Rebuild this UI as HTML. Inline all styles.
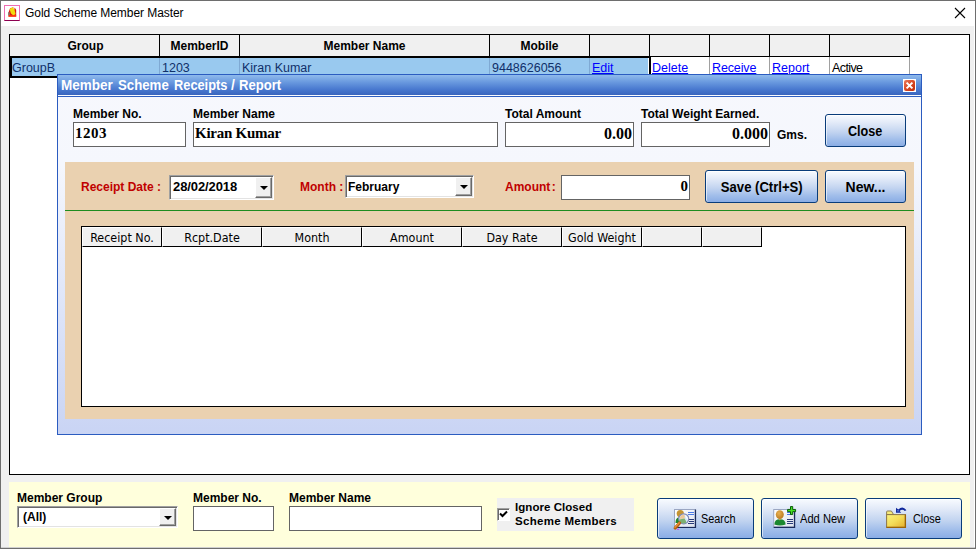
<!DOCTYPE html>
<html><head><meta charset="utf-8">
<style>
*{box-sizing:border-box;margin:0;padding:0}
html,body{width:976px;height:549px;overflow:hidden;background:#fff}
body{position:relative;font-family:"Liberation Sans",sans-serif;font-size:12px;color:#000}
.abs{position:absolute}
.lbl{position:absolute;font-weight:bold;font-size:12px;line-height:14px;white-space:nowrap}
.tb{position:absolute;background:#fff;border:1px solid #646464}
.serif{font-family:"Liberation Serif",serif;font-weight:bold;font-size:16px;line-height:18px;white-space:nowrap;position:absolute}
.hd{position:absolute;top:35px;height:21px;background:#f0f0f0;border-right:1px solid #000;font-weight:bold;font-size:12px;line-height:23px;text-align:center}
.cell{position:absolute;top:59px;height:18px;font-size:12.5px;line-height:19px;white-space:nowrap;padding-left:2px}
.lnk{color:#0000ff;text-decoration:underline}
.btn{position:absolute;border:1px solid #093c7a;border-radius:3px;box-shadow:inset 0 1px 0 #fff,inset 1px 0 0 rgba(255,255,255,.6);background:linear-gradient(#f8fbff 0%,#e2eaf8 25%,#c2d4f0 55%,#a0bdea 80%,#8aade5 100%);font-weight:bold;font-size:14px;text-align:center;white-space:nowrap}
.btn span{display:inline-block}
.ih{position:absolute;top:227px;height:20px;background:#f0f0f0;border:1px solid;border-color:#fff #000 #000 #fff;font-family:"DejaVu Sans Condensed","Liberation Sans",sans-serif;font-size:12.4px;line-height:19px;text-align:center;white-space:nowrap}
.sunk{position:absolute;background:#fff;border:1px solid;border-color:#a0a0a0 #fff #fff #a0a0a0;box-shadow:inset 1px 1px 0 #696969,inset -1px -1px 0 #e3e3e3}
.ddb{position:absolute;background:#f0f0f0;border:1px solid;border-color:#fff #696969 #696969 #fff;box-shadow:inset -1px -1px 0 #a0a0a0}
.ddb:after{content:"";position:absolute;left:4px;top:7px;border-left:4px solid transparent;border-right:4px solid transparent;border-top:4px solid #000}
.ddb.d8:after{top:8px}
.bt{top:511px;font-size:12.5px;line-height:16px;white-space:nowrap;transform:scaleX(.87);transform-origin:0 0}
.dt span{position:absolute;top:0;font-weight:bold;font-size:14px;line-height:16px;color:#fff;white-space:nowrap;transform-origin:0 0}
</style></head><body>
<!-- window frame -->
<div class="abs" style="left:0;top:0;width:976px;height:549px;border:1px solid #6e6e6e"></div>
<div class="abs" style="left:1px;top:547px;width:974px;height:1px;background:#d0d0d0"></div>
<!-- title bar -->
<div class="abs" style="left:4px;top:5px;width:16px;height:16px;border:1px solid #f06eb4;border-bottom-color:#8c0050;background:#fff">
<svg width="14" height="14" viewBox="0 0 14 14" style="position:absolute;left:0;top:0"><path d="M3.5 10.6 V6.5 L5 2.6 L8 1.2 L10.4 2.4 L11.2 4 V10.6 Z" fill="#dc1810"/><path d="M4.6 3 L8 1 L9.4 3.2 L10.6 8 L8.4 9.6 L6 7.6 Z" fill="#f2da0c"/><path d="M3.5 9.2h7.7v1.6h-7.7z" fill="#ff3c10"/><path d="M3 6.6 L4.4 6 L4.8 9 L3 9.2Z" fill="#8a8078"/><path d="M7.6 1.4 L9.2 1.6 L9.6 3.4 Z" fill="#f4f4f4"/></svg>
</div>
<div class="abs" style="left:25px;top:5px;font-size:12px;line-height:16px;white-space:nowrap;letter-spacing:-0.06px" id="title">Gold Scheme Member Master</div>
<svg class="abs" style="left:954px;top:7px" width="12" height="12" viewBox="0 0 12 12"><path d="M1 1 L11 11 M11 1 L1 11" stroke="#000" stroke-width="1.1" fill="none"/></svg>
<!-- client -->
<div class="abs" style="left:1px;top:26px;width:973px;height:521px;background:#f0f0f0"></div>
<!-- main grid -->
<div class="abs" style="left:9px;top:34px;width:961px;height:441px;background:#fff;border:1px solid #000"></div>
<div class="abs" style="left:10px;top:56px;width:900px;height:1px;background:#000"></div>
<div class="hd" style="left:10px;width:150px;padding-left:2px">Group</div>
<div class="hd" style="left:160px;width:80px">MemberID</div>
<div class="hd" style="left:240px;width:250px">Member Name</div>
<div class="hd" style="left:490px;width:100px">Mobile</div>
<div class="hd" style="left:590px;width:60px"></div>
<div class="hd" style="left:650px;width:60px"></div>
<div class="hd" style="left:710px;width:60px"></div>
<div class="hd" style="left:770px;width:60px"></div>
<div class="hd" style="left:830px;width:80px"></div>
<!-- selected row -->
<div class="abs" style="left:9px;top:56px;width:642px;height:22px;background:#000"></div>
<div class="abs" style="left:12px;top:58px;width:636px;height:18px;background:#99c9ef"></div>
<div class="abs" style="left:648px;top:58px;width:1px;height:18px;background:#fff"></div>
<div class="abs" style="left:159px;top:58px;width:1px;height:18px;background:#7fa9d3"></div>
<div class="abs" style="left:239px;top:58px;width:1px;height:18px;background:#7fa9d3"></div>
<div class="abs" style="left:489px;top:58px;width:1px;height:18px;background:#7fa9d3"></div>
<div class="abs" style="left:589px;top:58px;width:1px;height:18px;background:#7fa9d3"></div>
<div class="abs" style="left:709px;top:57px;width:1px;height:20px;background:#a0a0a0"></div>
<div class="abs" style="left:769px;top:57px;width:1px;height:20px;background:#a0a0a0"></div>
<div class="abs" style="left:829px;top:57px;width:1px;height:20px;background:#a0a0a0"></div>
<div class="abs" style="left:909px;top:57px;width:1px;height:20px;background:#a0a0a0"></div>
<div id="c1" class="cell" style="left:10px;color:#10306a">GroupB</div>
<div id="c2" class="cell" style="left:160px;color:#10306a">1203</div>
<div id="c3" class="cell" style="left:240px;color:#10306a">Kiran Kumar</div>
<div id="c4" class="cell" style="left:490px;color:#10306a">9448626056</div>
<div id="c5" class="cell lnk" style="left:590px">Edit</div>
<div id="c6" class="cell lnk" style="left:650px">Delete</div>
<div id="c7" class="cell lnk" style="left:710px;letter-spacing:-0.12px">Receive</div>
<div id="c8" class="cell lnk" style="left:770px">Report</div>
<div id="c9" class="cell" style="left:830px;letter-spacing:-0.6px">Active</div>
<!-- dialog -->
<div class="abs" style="left:57px;top:74px;width:865px;height:361px;border:1px solid #2b5cc0;background:linear-gradient(#f7f8fd 0px,#f5f7fd 90px,#c9d4f4 360px)"></div>
<div class="abs" style="left:58px;top:75px;width:863px;height:20px;background:linear-gradient(#8fbaec 0%,#6a9adf 35%,#4a7ad0 70%,#3a66be 100%)"></div>
<div class="abs" style="left:58px;top:95px;width:863px;height:1px;background:#fbfcff"></div>
<div class="abs" style="left:58px;top:96px;width:863px;height:1px;background:#3060c0"></div>
<div class="abs dt" id="dtitle" style="left:0;top:77px;width:400px;height:17px"><span id="w1" style="left:61px;transform:scaleX(.966)">Member</span><span id="w2" style="left:118px;transform:scaleX(.945)">Scheme</span><span id="w3" style="left:173.5px;transform:scaleX(.915)">Receipts</span><span id="w4" style="left:231px">/</span><span id="w5" style="left:238.5px;transform:scaleX(.935)">Report</span></div>
<div class="abs" style="left:903px;top:79px;width:13px;height:13px;background:#fff"><div style="position:absolute;left:1px;top:1px;width:11px;height:11px;border-radius:2px;background:linear-gradient(135deg,#ea7a5c 0%,#d84a26 50%,#c02c08 100%)"></div>
<svg width="13" height="13" viewBox="0 0 13 13" style="position:absolute;left:0;top:0"><path d="M3.6 3.6 L9.4 9.4 M9.4 3.6 L3.6 9.4" stroke="#fff" stroke-width="2" fill="none"/></svg></div>
<!-- dialog row 1 -->
<div class="lbl" style="left:73px;top:107px">Member No.</div>
<div class="lbl" style="left:193px;top:107px">Member Name</div>
<div class="lbl" style="left:505px;top:107px">Total Amount</div>
<div class="lbl" style="left:641px;top:107px">Total Weight Earned.</div>
<div class="tb" style="left:73px;top:122px;width:113px;height:25px"></div>
<div class="tb" style="left:193px;top:122px;width:305px;height:25px"></div>
<div class="tb" style="left:505px;top:122px;width:129px;height:25px"></div>
<div class="tb" style="left:641px;top:122px;width:129px;height:25px"></div>
<div id="n1" class="serif" style="left:75px;top:124px;font-size:15px;letter-spacing:0.5px">1203</div>
<div id="kk" class="serif" style="left:195px;top:124px;font-size:15px;letter-spacing:-0.25px">Kiran Kumar</div>
<div class="serif" style="right:344px;top:125px">0.00</div>
<div class="serif" style="right:208px;top:125px">0.000</div>
<div class="lbl" style="left:777px;top:128px">Gms.</div>
<div class="btn" style="left:825px;top:114px;width:81px;height:33px;line-height:33px"><span style="transform:scaleX(.9)">Close</span></div>
<!-- tan panel -->
<div class="abs" style="left:65px;top:162px;width:849px;height:257px;background:#ead1b0"></div>
<div class="abs" style="left:65px;top:210px;width:849px;height:1px;background:#1e8c1e"></div>
<div class="lbl" style="left:81px;top:180px;color:#c00000">Receipt Date :</div>
<div class="sunk" style="left:169px;top:175px;width:105px;height:25px"></div>
<div class="abs" style="left:173px;top:179px;font-weight:bold;font-size:13px;letter-spacing:-0.1px;line-height:16px">28/02/2018</div>
<div class="ddb d8" style="left:255px;top:177px;width:17px;height:21px"></div>
<div class="lbl" style="left:300px;top:180px;color:#c00000">Month :</div>
<div class="sunk" style="left:345px;top:175px;width:129px;height:23px"></div>
<div class="abs" style="left:348px;top:180px;font-weight:bold;font-size:12px;line-height:14px">February</div>
<div class="ddb" style="left:455px;top:177px;width:17px;height:19px"></div>
<div class="lbl" style="left:505px;top:180px;color:#c00000;word-spacing:-2px">Amount :</div>
<div class="tb" style="left:561px;top:175px;width:129px;height:25px"></div>
<div id="a0" class="serif" style="right:288px;top:177px;font-size:15px">0</div>
<div class="btn" style="left:705px;top:170px;width:113px;height:33px;line-height:33px"><span style="transform:scaleX(.935)">Save (Ctrl+S)</span></div>
<div class="btn" style="left:825px;top:170px;width:81px;height:33px;line-height:33px"><span>New...</span></div>
<!-- inner grid -->
<div class="abs" style="left:81px;top:226px;width:825px;height:181px;background:#fff;border:1px solid #000"></div>
<div class="ih" style="left:82px;width:80px">Receipt No.</div>
<div class="ih" style="left:162px;width:100px">Rcpt.Date</div>
<div class="ih" style="left:262px;width:100px">Month</div>
<div class="ih" style="left:362px;width:100px">Amount</div>
<div class="ih" style="left:462px;width:100px">Day Rate</div>
<div class="ih" style="left:562px;width:80px">Gold Weight</div>
<div class="ih" style="left:642px;width:60px"></div>
<div class="ih" style="left:702px;width:60px"></div>
<!-- bottom panel -->
<div class="abs" style="left:9px;top:482px;width:961px;height:65px;background:#ffffdc"></div>
<div class="lbl" style="left:17px;top:491px">Member Group</div>
<div class="lbl" style="left:193px;top:491px">Member No.</div>
<div class="lbl" style="left:289px;top:491px">Member Name</div>
<div class="sunk" style="left:17px;top:506px;width:161px;height:22px"></div>
<div class="abs" style="left:23px;top:510px;font-weight:bold;font-size:12px;line-height:14px">(All)</div>
<div class="ddb" style="left:159px;top:508px;width:17px;height:18px"></div>
<div class="tb" style="left:193px;top:506px;width:81px;height:25px"></div>
<div class="tb" style="left:289px;top:506px;width:193px;height:25px"></div>
<div class="abs" style="left:497px;top:498px;width:137px;height:33px;background:#f0f0f0"></div>
<div class="abs" style="left:497px;top:508px;width:13px;height:13px;background:#fff;border:1px solid;border-color:#a0a0a0 #fff #fff #a0a0a0;box-shadow:inset 1px 1px 0 #696969"></div>
<svg class="abs" style="left:497px;top:508px" width="13" height="13" viewBox="0 0 13 13"><path d="M3 5.5 L5.5 8 L10 3.5" stroke="#000" stroke-width="2" fill="none"/></svg>
<div class="lbl" style="left:515px;top:500px;font-size:11.5px;letter-spacing:0.3px;line-height:14px"><span style="letter-spacing:0.05px">Ignore Closed</span><br>Scheme Members</div>
<div class="btn" style="left:657px;top:498px;width:97px;height:41px"></div>
<div class="btn" style="left:761px;top:498px;width:97px;height:41px"></div>
<div class="btn" style="left:865px;top:498px;width:97px;height:41px"></div>
<!-- search icon -->
<svg class="abs" style="left:672px;top:506px" width="26" height="26" viewBox="0 0 26 26">
<defs><linearGradient id="cg" x1="0" y1="0" x2="1" y2="1"><stop offset="0" stop-color="#ffffff"/><stop offset="1" stop-color="#dfe4ee"/></linearGradient>
<linearGradient id="fg" x1="0" y1="0" x2="1" y2="1"><stop offset="0" stop-color="#f9f380"/><stop offset=".5" stop-color="#f4dc58"/><stop offset="1" stop-color="#e4ae2c"/></linearGradient>
<radialGradient id="hg" cx=".4" cy=".35" r=".7"><stop offset="0" stop-color="#e8b050"/><stop offset="1" stop-color="#b87820"/></radialGradient></defs>
<rect x="2.5" y="3.5" width="20.6" height="17.6" fill="url(#cg)" stroke="#9aa6c2"/>
<path d="M2.5 21.5 H23.5 V3.5" fill="none" stroke="#1c2c5c" stroke-width="1.2"/>
<path d="M16 6.5H22M16 8.5H22" stroke="#4a7ae6" stroke-width="1"/>
<path d="M17 13.5H22M17 15.5H22M16 17.5H22" stroke="#2a3c7a" stroke-width="1"/>
<circle cx="8.3" cy="7.6" r="3.6" fill="#c49432"/>
<path d="M3.5 17 Q3.5 11.5 7 11.5 L9 17 Z" fill="#22862c"/>
<circle cx="11.7" cy="12.8" r="5" fill="#d4e8f8" stroke="#8088b4" stroke-width="1.2"/>
<path d="M8 11.5 Q9 8.5 12 8.6 Q13.5 10 12.5 12.5 L8.2 13 Z" fill="#eec898"/>
<path d="M7.3 13.5 L12.5 12.6 Q14 15 14.5 16.5 Q11.5 18.5 8.5 16.6 Q7.3 15.3 7.3 13.5Z" fill="#7cb070"/>
<path d="M13 9 Q16 10 16 14 Q14 12.5 13.5 11Z" fill="#f4fbff"/>
<path d="M7.6 17 L3.2 22" stroke="#b85c10" stroke-width="3.2" stroke-linecap="round"/>
<path d="M7.2 16.8 L3 21.4" stroke="#e89038" stroke-width="1.4" stroke-linecap="round"/>
<rect x="5.4" y="22.8" width="1.2" height="1.2" fill="#e818e8"/>
</svg>
<!-- add new icon -->
<svg class="abs" style="left:772px;top:505px" width="26" height="26" viewBox="0 0 26 26">
<rect x="1.7" y="4.5" width="20.4" height="17.6" fill="url(#cg)" stroke="#9aa6c2"/>
<path d="M1.7 22.4 H22.6 V4.5" fill="none" stroke="#1c2c5c" stroke-width="1.2"/>
<path d="M15 7.5H19M15 9.5H19" stroke="#4a7ae6" stroke-width="1"/>
<path d="M15 14.5H21M15 16.5H21M15 18.5H21" stroke="#2a3c7a" stroke-width="1"/>
<path d="M2.4 19.5 Q2.4 14.2 7.8 14.2 Q13.6 14.2 13.6 19.5 Q8 21.6 2.4 19.5Z" fill="#1c8830"/>
<ellipse cx="7.8" cy="9.6" rx="4" ry="4.4" fill="url(#hg)"/>
<path d="M6.8 14 L7.8 15.6 L8.8 14Z" fill="#d8a050"/>
<path d="M18.5 1.55h2.2v2.9h2.9v2.2h-2.9v2.9h-2.2v-2.9h-2.9v-2.2h2.9z" fill="#44e020" stroke="#0a5c0a" stroke-width="1" stroke-linejoin="round"/>
</svg>
<!-- folder icon -->
<svg class="abs" style="left:884px;top:505px" width="26" height="26" viewBox="0 0 26 26">
<path d="M2.6 9.6 V7 Q2.6 6 3.6 6 H7.4 L9.6 9.6Z" fill="#f6ea78" stroke="#8c7c58" stroke-width="1"/>
<rect x="2.6" y="9.6" width="18.8" height="12.8" fill="url(#fg)" stroke="#8c7446" stroke-width="1"/>
<path d="M2.6 22.4 H21.4 V9.6" fill="none" stroke="#9c6408" stroke-width="1.3"/>
<path d="M12 2.8 V7.7 H17.2 L15.6 6.1 Q18.2 3.4 20.8 6 L22.4 5.3 Q19 0.2 14.3 4.4 Z" fill="#10289c"/>
<rect x="13.2" y="5" width="1.6" height="1.6" fill="#5070d0"/>
</svg>
<div class="abs bt" style="left:701px">Search</div>
<div class="abs bt" style="left:800px;transform:scaleX(.89)">Add New</div>
<div class="abs bt" style="left:913px">Close</div>
</body></html>
